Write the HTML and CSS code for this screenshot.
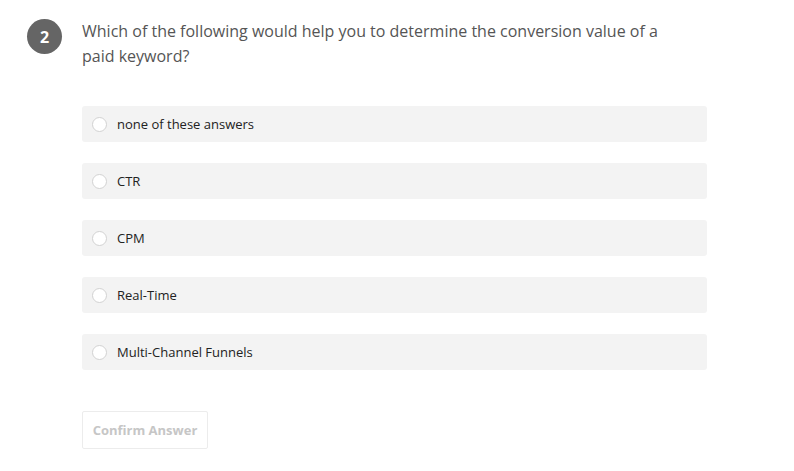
FILE: index.html
```html
<!DOCTYPE html>
<html>
<head>
<meta charset="utf-8">
<link rel="stylesheet" href="styles.css">
</head>
<body>
<div class="question">
  <div class="badge">2</div>
  <div class="content">
    <p class="prompt">Which of the following would help you to determine the conversion value of a paid keyword?</p>
    <ul class="options">
      <li class="option"><span class="radio"></span><span class="label">none of these answers</span></li>
      <li class="option"><span class="radio"></span><span class="label">CTR</span></li>
      <li class="option"><span class="radio"></span><span class="label">CPM</span></li>
      <li class="option"><span class="radio"></span><span class="label">Real-Time</span></li>
      <li class="option"><span class="radio"></span><span class="label">Multi-Channel Funnels</span></li>
    </ul>
    <button class="confirm" disabled>Confirm Answer</button>
  </div>
</div>
</body>
</html>
```
FILE: styles.css
```css
* { box-sizing: border-box; }
body {
  margin: 0;
  background: #fff;
  font-family: "Open Sans", "Liberation Sans", sans-serif;
}
.question {
  display: flex;
  gap: 20px;
  padding: 19px 0 0 27px;
}
.badge {
  flex: none;
  width: 35px;
  height: 35px;
  border-radius: 50%;
  background: #656565;
  color: #fff;
  font-weight: 700;
  font-size: 16px;
  display: flex;
  align-items: center;
  justify-content: center;
}
.content {
  width: 625px;
}
.prompt {
  margin: 0;
  font-size: 16px;
  line-height: 25px;
  color: #555;
  padding-right: 40px;
}
.options {
  list-style: none;
  margin: 37px 0 0;
  padding: 0;
  display: flex;
  flex-direction: column;
  gap: 21px;
}
.option {
  height: 36px;
  background: #f3f3f3;
  border-radius: 3px;
  display: flex;
  align-items: center;
  padding-left: 10px;
  gap: 10px;
}
.radio {
  width: 15px;
  height: 15px;
  border-radius: 50%;
  border: 1px solid #d2d2d2;
  background: #fff;
  flex: none;
}
.label {
  font-size: 13px;
  color: #222;
}
.confirm {
  margin-top: 41px;
  width: 126px;
  height: 38px;
  background: #fff;
  border: 1px solid #ececec;
  border-radius: 2px;
  font-family: "Open Sans", "Liberation Sans", sans-serif;
  font-weight: 700;
  font-size: 13px;
  color: #c6c6c6;
  padding: 0;
}
```
